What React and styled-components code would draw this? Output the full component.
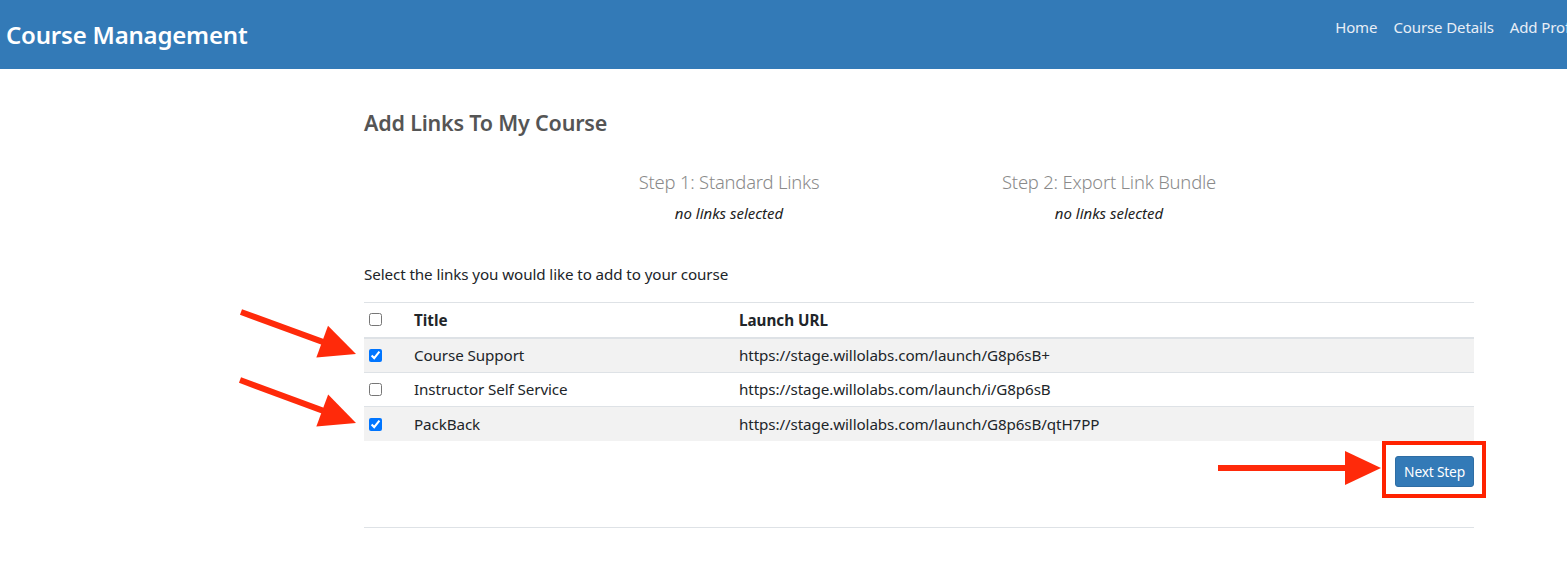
import React from "react";
import styled, { createGlobalStyle } from "styled-components";

const Global = createGlobalStyle`
  html, body { margin: 0; padding: 0; background: #fff; }
  body { font-family: "Noto Sans", "Open Sans", sans-serif; color: #212529; overflow: hidden; }
  * { box-sizing: border-box; }
`;

const Page = styled.div`
  position: relative;
  width: 1567px;
  height: 561px;
  overflow: hidden;
`;

const TopBar = styled.header`
  height: 69px;
  background: #337ab7;
  display: flex;
  align-items: center;
  justify-content: space-between;
  padding-left: 6px;
  white-space: nowrap;
  overflow: hidden;
`;

const Brand = styled.div`
  color: #fff;
  font-size: 24px;
  font-weight: 600;
  letter-spacing: -0.2px;
  margin-top: -1px;
`;

const Nav = styled.nav`
  display: flex;
  gap: 16px;
  margin-right: -19px;
  margin-top: -15px;
`;

const NavLink = styled.a`
  color: #e8eef6;
  font-size: 15px;
  text-decoration: none;
  letter-spacing: -0.1px;
`;

const Content = styled.main`
  margin-left: 364px;
  width: 1110px;
  padding-top: 34px;
`;

const Heading = styled.h2`
  margin: 0;
  font-size: 21.5px;
  font-weight: 600;
  color: #555;
  line-height: 40px;
  letter-spacing: -0.2px;
`;

const Steps = styled.div`
  display: flex;
  padding-left: 175px;
  margin-top: 27px;
`;

const Step = styled.div`
  width: 380px;
  text-align: center;
`;

const StepTitle = styled.div`
  font-size: 18.4px;
  font-weight: 300;
  color: #8a8a8a;
  line-height: 24px;
  letter-spacing: -0.2px;
`;

const StepNote = styled.div`
  font-size: 15px;
  font-style: italic;
  color: #222;
  line-height: 20px;
  margin-top: 9px;
`;

const Intro = styled.p`
  margin: 39px 0 0;
  font-size: 15.2px;
  line-height: 24px;
  color: #212529;
  letter-spacing: -0.1px;
`;

const Table = styled.table`
  width: 100%;
  border-collapse: collapse;
  margin-top: 16px;
  font-size: 15.2px;
`;

const HeadCell = styled.th`
  text-align: left;
  font-weight: 700;
  height: 35px;
  padding: 0 5px;
  border-top: 1px solid #dee2e6;
  border-bottom: 2px solid #dee2e6;
  width: ${(p) => p.$w || "auto"};
  vertical-align: middle;
`;

const Row = styled.tr`
  background: ${(p) => (p.$striped ? "#f2f2f2" : "#fff")};
`;

const Cell = styled.td`
  height: 34.5px;
  padding: 0 5px;
  border-top: 1px solid #dee2e6;
  vertical-align: middle;
  letter-spacing: -0.1px;
`;

const Check = styled.input.attrs({ type: "checkbox" })`
  margin: 0;
  width: 13px;
  height: 13px;
  accent-color: #0075ff;
  display: block;
`;

const Actions = styled.div`
  display: flex;
  justify-content: flex-end;
  padding-top: 0;
  padding-bottom: 29px;
  border-bottom: 1px solid #dee2e6;
`;

const Highlight = styled.div`
  border: 4px solid #ff2200;
  padding: 11px 8px 7px 9px;
  margin-right: -12px;
`;

const Button = styled.button`
  background: #337ab7;
  color: #fff;
  border: 1px solid #2e6da4;
  border-radius: 3px;
  font-family: "Noto Sans", "Open Sans", sans-serif;
  font-size: 13.8px;
  height: 31px;
  padding: 0 8px;
  letter-spacing: -0.2px;
`;

const Overlay = styled.svg`
  position: absolute;
  left: 0;
  top: 0;
  pointer-events: none;
`;

const links = [
  { title: "Course Support", url: "https://stage.willolabs.com/launch/G8p6sB+", checked: true },
  { title: "Instructor Self Service", url: "https://stage.willolabs.com/launch/i/G8p6sB", checked: false },
  { title: "PackBack", url: "https://stage.willolabs.com/launch/G8p6sB/qtH7PP", checked: true },
];

function Arrow({ x1, y1, x2, y2 }) {
  const dx = x2 - x1;
  const dy = y2 - y1;
  const len = Math.hypot(dx, dy);
  const ux = dx / len;
  const uy = dy / len;
  const headLen = 36;
  const headW = 17;
  const bx = x2 - ux * headLen;
  const by = y2 - uy * headLen;
  const px = -uy;
  const py = ux;
  return (
    <g>
      <line x1={x1} y1={y1} x2={bx + ux * 2} y2={by + uy * 2} stroke="#ff2a0a" strokeWidth="6" />
      <polygon
        points={`${x2},${y2} ${bx + px * headW},${by + py * headW} ${bx - px * headW},${by - py * headW}`}
        fill="#ff2a0a"
      />
    </g>
  );
}

export default function App() {
  return (
    <Page>
      <Global />
      <TopBar>
        <Brand>Course Management</Brand>
        <Nav>
          <NavLink>Home</NavLink>
          <NavLink>Course Details</NavLink>
          <NavLink>Add Profile</NavLink>
        </Nav>
      </TopBar>
      <Content>
        <Heading>Add Links To My Course</Heading>
        <Steps>
          <Step>
            <StepTitle>Step 1: Standard Links</StepTitle>
            <StepNote>no links selected</StepNote>
          </Step>
          <Step>
            <StepTitle>Step 2: Export Link Bundle</StepTitle>
            <StepNote>no links selected</StepNote>
          </Step>
        </Steps>
        <Intro>Select the links you would like to add to your course</Intro>
        <Table>
          <thead>
            <tr>
              <HeadCell $w="45px">
                <Check readOnly />
              </HeadCell>
              <HeadCell $w="325px">Title</HeadCell>
              <HeadCell>Launch URL</HeadCell>
            </tr>
          </thead>
          <tbody>
            {links.map((l, i) => (
              <Row key={l.title} $striped={i % 2 === 0}>
                <Cell>
                  <Check checked={l.checked} readOnly />
                </Cell>
                <Cell>{l.title}</Cell>
                <Cell>{l.url}</Cell>
              </Row>
            ))}
          </tbody>
        </Table>
        <Actions>
          <Highlight>
            <Button>Next Step</Button>
          </Highlight>
        </Actions>
      </Content>
      <Overlay width="1567" height="561">
        <Arrow x1={241} y1={312} x2={356} y2={354} />
        <Arrow x1={240} y1={380} x2={356} y2={423} />
        <Arrow x1={1218} y1={468} x2={1381} y2={468} />
      </Overlay>
    </Page>
  );
}
